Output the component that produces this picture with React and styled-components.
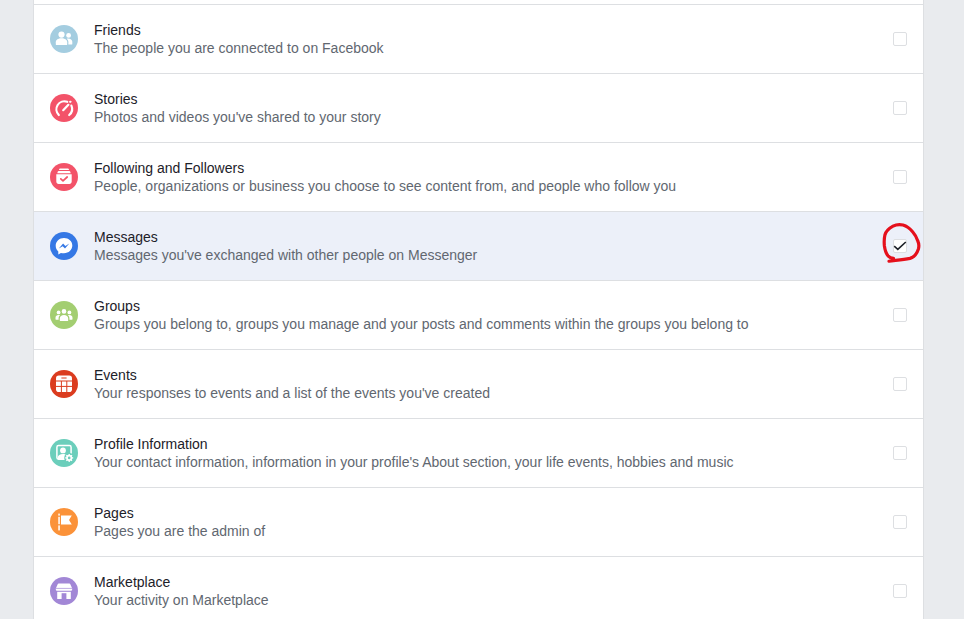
import React from 'react';
import styled, { createGlobalStyle } from 'styled-components';

const GlobalStyle = createGlobalStyle`
  html, body {
    margin: 0;
    padding: 0;
    height: 100%;
    overflow: hidden;
    background: #e9ebee;
    font-family: "Liberation Sans", Arial, sans-serif;
  }
`;

const Page = styled.div`
  height: 619px;
  padding: 0 40px 0 33px;
  overflow: hidden;
`;

const Panel = styled.div`
  position: relative;
  background: #fff;
  border-left: 1px solid #dddfe2;
  border-right: 1px solid #dddfe2;
  padding-top: 4px;
`;

const Row = styled.div`
  display: flex;
  align-items: center;
  box-sizing: border-box;
  height: 69px;
  padding: 0 16px 0 16px;
  border-top: 1px solid #dddfe2;
  background: ${props => (props.$active ? '#ecf0f9' : '#fff')};
`;

const IconBox = styled.svg`
  flex: none;
  display: block;
  width: 28px;
  height: 28px;
  margin-right: 16px;
`;

const TextBlock = styled.div`
  flex: 1;
  min-width: 0;
`;

const Title = styled.div`
  font-size: 14px;
  line-height: 18px;
  color: #1d2129;
`;

const Description = styled.div`
  font-size: 14px;
  line-height: 18px;
  color: #616770;
`;

const Checkbox = styled.div`
  flex: none;
  display: flex;
  align-items: center;
  justify-content: center;
  box-sizing: border-box;
  width: 14px;
  height: 14px;
  background: #fff;
  border: 1px solid #dddfe2;
  border-radius: 2px;
`;

const CheckMark = styled.svg`
  flex: none;
  display: block;
  width: 14px;
  height: 14px;
`;

const Scribble = styled.svg`
  position: absolute;
  left: 848px;
  top: 222px;
  width: 40px;
  height: 42px;
  pointer-events: none;
`;

const icons = {
  friends: (
    <g fill="#fff">
      <circle cx="11.5" cy="9.6" r="3.1" />
      <path d="M5.8 19.4v-2.2c0-2.3 2.3-3.9 5.7-3.9s5.7 1.6 5.7 3.9v2.2c0 .4-.3.6-.6.6H6.4c-.3 0-.6-.2-.6-.6z" />
      <circle cx="18.6" cy="10.4" r="2.4" />
      <path d="M18.3 19.6h3.4c.3 0 .6-.2.6-.6v-2.2c0-1.9-1.8-3.2-4.3-3.2-.5 0-.9 0-1.3.1 1.1.8 1.7 2 1.7 3.4z" />
    </g>
  ),
  stories: (
    <g fill="none" stroke="#fff" strokeLinecap="round">
      <path strokeWidth="2.2" d="M8.8 21a8 8 0 0 1 8.4-13.2" />
      <path strokeWidth="2.2" d="M21.4 11.6a8 8 0 0 1-2.2 9.4" />
      <path strokeWidth="2.2" d="M13.2 16.2l5.2-5.4" />
      <circle cx="20.2" cy="7.8" r=".7" fill="#fff" strokeWidth="1" />
    </g>
  ),
  following: (
    <g>
      <path fill="#fff" d="M10.4 5.6h7.2c.7 0 1.2.4 1.3 1l.1.5H9l.1-.5c.1-.6.6-1 1.3-1zM8.8 8h10.4c.6 0 1 .3 1.1.8l.4 1.4H7.3l.4-1.4c.1-.5.5-.8 1.1-.8zM6.3 11.2h15.4v7.4c0 1.3-1 2.4-2.3 2.4H8.6c-1.3 0-2.3-1.1-2.3-2.4z" />
      <path fill="none" stroke="#f35369" strokeWidth="1.7" strokeLinecap="round" strokeLinejoin="round" d="M10.8 15.8l2.2 2 4.2-3.8" />
    </g>
  ),
  messages: (
    <g>
      <path fill="#fff" d="M14 6C9.3 6 5.7 9.4 5.7 13.8c0 2.3 1 4.3 2.6 5.7v2.9l2.6-1.5c1 .3 2 .4 3.1.4 4.7 0 8.3-3.4 8.3-7.7S18.7 6 14 6z" />
      <path fill="#3578e5" d="M8.8 16.6l4.3-5 2.3 2.3 3.9-2.3-4.3 5-2.3-2.4z" />
    </g>
  ),
  groups: (
    <g fill="#fff">
      <circle cx="14" cy="10.4" r="2.3" />
      <circle cx="8.6" cy="11.4" r="1.9" />
      <circle cx="19.4" cy="11.4" r="1.9" />
      <path d="M9.8 19.6v-2.2c0-2 1.8-3.4 4.2-3.4s4.2 1.4 4.2 3.4v2.2c0 .3-.2.5-.5.5h-7.4c-.3 0-.5-.2-.5-.5z" />
      <path d="M8.6 18.8H6c-.3 0-.5-.2-.5-.5v-1.6c0-1.6 1.3-2.6 3.1-2.6.5 0 1 .1 1.4.2-.9.8-1.4 1.8-1.4 3z" />
      <path d="M19.4 18.8H22c.3 0 .5-.2.5-.5v-1.6c0-1.6-1.3-2.6-3.1-2.6-.5 0-1 .1-1.4.2.9.8 1.4 1.8 1.4 3z" />
    </g>
  ),
  events: (
    <g>
      <rect x="6" y="5.6" width="16" height="16.4" rx="2.8" fill="#fff" />
      <path stroke="#db3c1f" strokeWidth="1" d="M11.4 8h5.2" />
      <path stroke="#db3c1f" strokeWidth="1" d="M6 11h16M6 16.4h16M11.4 11v11M16.8 11v11" />
    </g>
  ),
  profile: (
    <g>
      <rect x="6.9" y="6.6" width="14.2" height="13.6" rx="1.6" fill="none" stroke="#fff" strokeWidth="1.5" />
      <circle cx="13" cy="11.4" r="2.9" fill="#fff" />
      <path fill="#fff" d="M7.8 20v-1.6c0-2 2.3-3.4 5.2-3.4 1.8 0 3.3.5 4.3 1.4l-1 3.6z" />
      <circle cx="19.2" cy="18.9" r="5" fill="#6bcebb" />
      <circle cx="19.2" cy="18.9" r="2.2" fill="none" stroke="#fff" strokeWidth="1.7" />
      <path stroke="#fff" strokeWidth="1.3" d="M19.2 14.9v1.6M19.2 21.3v1.6M15.2 18.9h1.6M21.6 18.9h1.6M16.4 16.1l1.1 1.1M20.9 20.6l1.1 1.1M16.4 21.7l1.1-1.1M20.9 17.2l1.1-1.1" />
    </g>
  ),
  pages: (
    <g fill="#fff">
      <rect x="8.3" y="5.6" width="1.5" height="2" />
      <rect x="8.3" y="8.8" width="1.5" height="7.4" />
      <rect x="8.3" y="17.4" width="1.5" height="5" />
      <path d="M11 7.6h10.8L19 12l2.8 4.4H11z" />
    </g>
  ),
  marketplace: (
    <g>
      <path fill="#fff" d="M8.6 6.4h10.8c.4 0 .7.2.8.5l2 4.7v.6c0 .9-.7 1.6-1.6 1.6H7.4c-.9 0-1.6-.7-1.6-1.6v-.6l2-4.7c.1-.3.4-.5.8-.5z" />
      <path fill="#fff" d="M7.2 14.8h13.6V22H7.2z" />
      <rect x="11.6" y="16.2" width="4.8" height="5.8" fill="#a287d6" />
      <path stroke="#a287d6" strokeWidth=".7" d="M5.8 11.4h16.4" />
    </g>
  ),
};

const items = [
  { icon: 'friends', color: '#a4cde0', title: 'Friends', text: 'The people you are connected to on Facebook' },
  { icon: 'stories', color: '#f35369', title: 'Stories', text: "Photos and videos you've shared to your story" },
  { icon: 'following', color: '#f35369', title: 'Following and Followers', text: 'People, organizations or business you choose to see content from, and people who follow you' },
  { icon: 'messages', color: '#3578e5', title: 'Messages', text: "Messages you've exchanged with other people on Messenger", checked: true },
  { icon: 'groups', color: '#a3ce71', title: 'Groups', text: 'Groups you belong to, groups you manage and your posts and comments within the groups you belong to' },
  { icon: 'events', color: '#db3c1f', title: 'Events', text: "Your responses to events and a list of the events you've created" },
  { icon: 'profile', color: '#6bcebb', title: 'Profile Information', text: "Your contact information, information in your profile's About section, your life events, hobbies and music" },
  { icon: 'pages', color: '#fb9239', title: 'Pages', text: 'Pages you are the admin of' },
  { icon: 'marketplace', color: '#a287d6', title: 'Marketplace', text: 'Your activity on Marketplace' },
];

const App = () => (
  <Page>
    <GlobalStyle />
    <Panel>
      {items.map(item => (
        <Row key={item.icon} $active={item.checked}>
          <IconBox viewBox="0 0 28 28">
            <circle cx="14" cy="14" r="14" fill={item.color} />
            {icons[item.icon]}
          </IconBox>
          <TextBlock>
            <Title>{item.title}</Title>
            <Description>{item.text}</Description>
          </TextBlock>
          <Checkbox $checked={item.checked}>
            {item.checked && (
              <CheckMark viewBox="0 0 14 14">
                <path d="M1.2 7.2l3.6 3.2 8-7.4" fill="none" stroke="#1d2129" strokeWidth="1.6" />
              </CheckMark>
            )}
          </Checkbox>
        </Row>
      ))}
      {/* red marker circle drawn over the checkbox */}
      <Scribble viewBox="0 0 40 42">
        <path
          d="M7 39.2C11 38.4 20 38.2 28 36.4C32 35.2 35 31.5 36.4 27C37.2 24 37 21.5 35.8 19C34.6 15.5 33 12.5 30.6 9.8C28 6.6 25 4.2 21 3C17.5 2.2 14 2.6 11 4.2C7 6.4 3.8 9.4 2.9 13C2 17 2 20 2.4 24C3 28 4 31.5 6 33.8C7.5 35.4 9.5 36.2 11.5 36.4"
          fill="none"
          stroke="#e5101c"
          strokeWidth="3.2"
          strokeLinecap="round"
          strokeLinejoin="round"
        />
      </Scribble>
    </Panel>
  </Page>
);

export default App;
